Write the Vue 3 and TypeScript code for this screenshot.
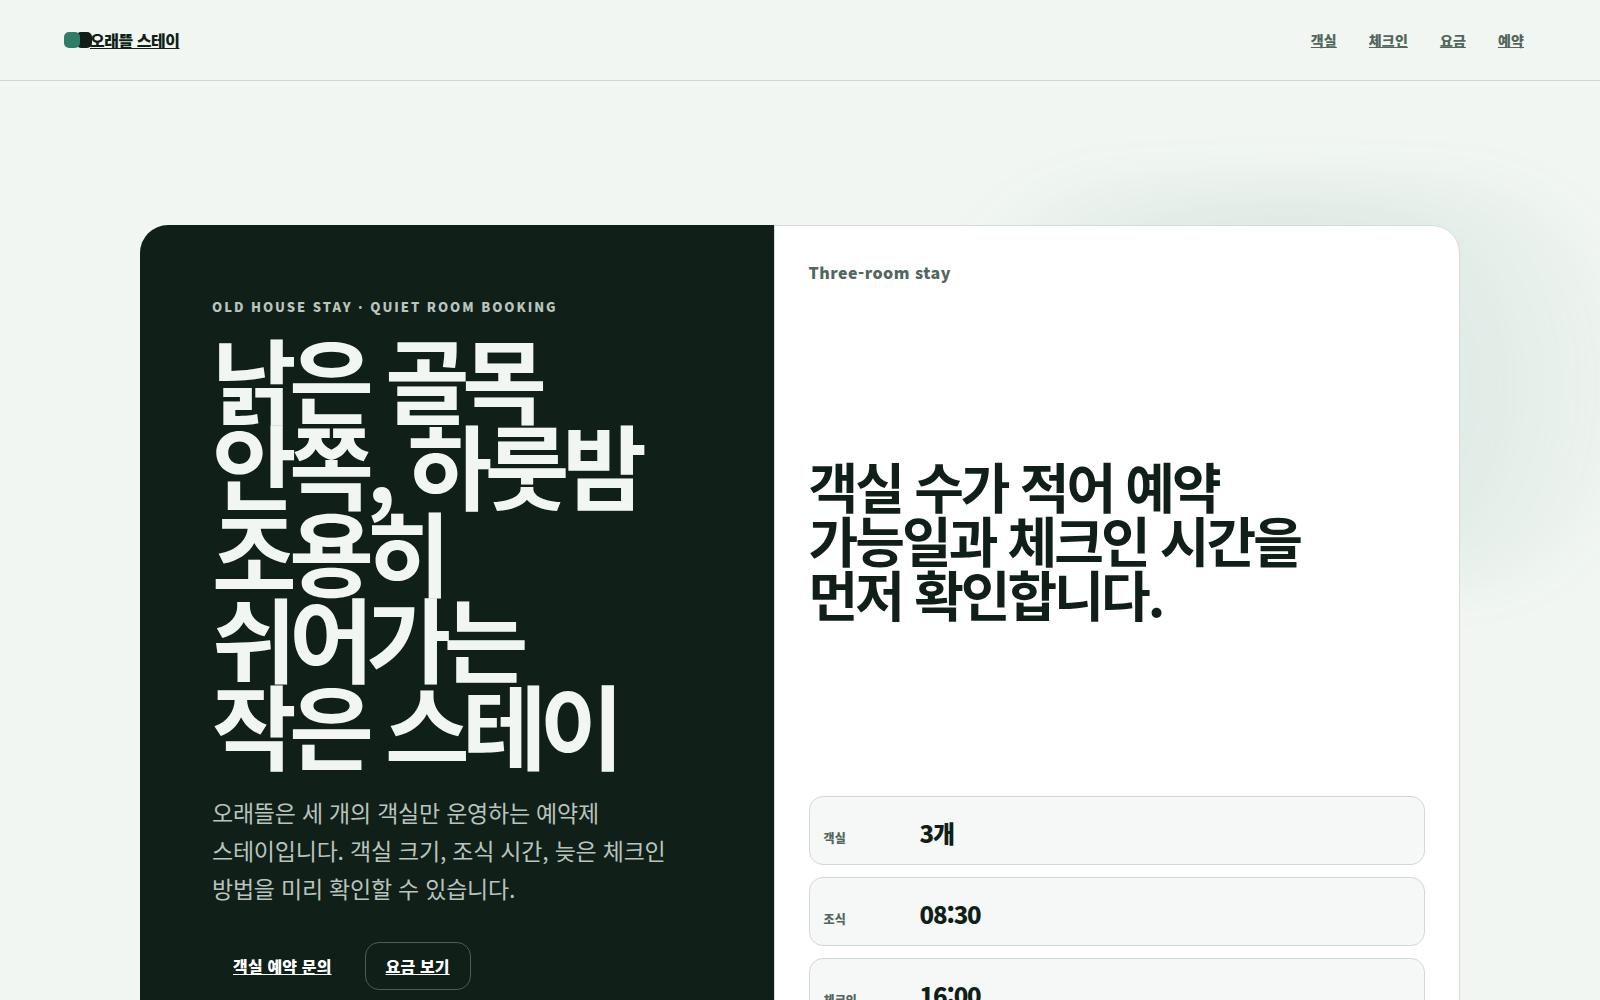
<script setup lang="ts">
interface Fact {
  label: string
  value: string
}

const links: string[] = ['객실', '체크인', '요금', '예약']
const facts: Fact[] = [
  { label: '객실', value: '3개' },
  { label: '조식', value: '08:30' },
  { label: '체크인', value: '16:00' },
]
</script>

<template>
  <div class="page" lang="ko">
    <header class="topbar">
      <a class="brand" href="#"><span class="mark" aria-hidden="true"></span>오래뜰 스테이</a>
      <nav class="nav">
        <a v-for="link in links" :key="link" href="#">{{ link }}</a>
      </nav>
    </header>

    <main class="hero">
      <div class="glow" aria-hidden="true"></div>
      <div class="card">
        <section class="intro">
          <p class="eyebrow">Old house stay · Quiet room booking</p>
          <h1>낡은 골목 안쪽, 하룻밤 조용히 쉬어가는 작은 스테이</h1>
          <p class="lead">
            오래뜰은 세 개의 객실만 운영하는 예약제 스테이입니다. 객실 크기, 조식 시간, 늦은 체크인 방법을 미리 확인할 수 있습니다.
          </p>
          <div class="actions">
            <a class="button primary" href="#">객실 예약 문의</a>
            <a class="button" href="#">요금 보기</a>
          </div>
        </section>
        <section class="summary">
          <p class="tag">Three-room stay</p>
          <h2>객실 수가 적어 예약 가능일과 체크인 시간을 먼저 확인합니다.</h2>
          <dl class="facts">
            <div v-for="fact in facts" :key="fact.label" class="fact">
              <dt>{{ fact.label }}</dt>
              <dd>{{ fact.value }}</dd>
            </div>
          </dl>
        </section>
      </div>
    </main>
  </div>
</template>

<style>
body {
  margin: 0;
  background: #f1f6f2;
}
</style>

<style scoped>
.page {
  min-height: 100vh;
  overflow: hidden;
  background: #f1f6f2;
  color: #111f19;
  font-family: "Noto Sans CJK KR", sans-serif;
  font-size: 16px;
  word-break: keep-all;
}

a {
  color: inherit;
  text-decoration: underline;
}

h1,
h2,
p,
dl,
dd {
  margin: 0;
}

.topbar {
  display: flex;
  align-items: center;
  justify-content: space-between;
  height: 80px;
  padding: 0 64px;
  border-bottom: 1px solid #d0d7d3;
}

.brand {
  display: flex;
  align-items: center;
  gap: 10px;
  font-weight: 800;
  letter-spacing: -0.03em;
}

.mark {
  width: 16px;
  height: 16px;
  border-radius: 5px;
  background: #2f7d68;
  box-shadow: 12px 0 0 #111f19;
}

.nav {
  display: flex;
  gap: 8px;
  color: #53665d;
  font-size: 14px;
  font-weight: 800;
  letter-spacing: 0.01em;
}

.nav a {
  padding: 8px 12px;
}

.hero {
  position: relative;
  padding: 144px 64px;
}

.glow {
  position: absolute;
  top: 104px;
  right: -58px;
  width: 740px;
  height: 400px;
  border-radius: 200px;
  background: radial-gradient(circle 370px, rgba(47, 125, 104, 0.16), rgba(47, 125, 104, 0));
  filter: blur(26px);
}

.card {
  position: relative;
  display: grid;
  grid-template-columns: 48fr 52fr;
  max-width: 1320px;
  margin: 0 auto;
}

.intro {
  padding: 72px;
  border-radius: 28px 0 0 28px;
  background: #111f19;
  color: #f1f6f2;
}

.eyebrow {
  color: #b8c4bd;
  font-size: 13px;
  font-weight: 800;
  line-height: 20px;
  letter-spacing: 0.15em;
  text-transform: uppercase;
}

h1 {
  max-width: 480px;
  margin-top: 17px;
  font-size: 92px;
  font-weight: 700;
  line-height: 0.94;
  letter-spacing: -0.08em;
}

.lead {
  margin-top: 27px;
  color: #b8c4bd;
  font-size: 23px;
  line-height: 38px;
  letter-spacing: -0.01em;
}

.actions {
  display: flex;
  flex-wrap: wrap;
  gap: 12px;
  margin-top: 35px;
}

.button {
  display: flex;
  align-items: center;
  min-height: 46px;
  padding: 0 20px;
  border: 1px solid #4e5c55;
  border-radius: 14px;
  color: #ffffff;
  font-weight: 800;
  letter-spacing: 0.01em;
}

.primary {
  border-color: transparent;
}

.summary {
  display: flex;
  flex-direction: column;
  justify-content: space-between;
  padding: 34px;
  border: 1px solid #d5ddd8;
  border-radius: 0 28px 28px 0;
  background: #ffffff;
}

.tag {
  color: #53665d;
  font-weight: 800;
  line-height: 24px;
  letter-spacing: 0.03em;
}

h2 {
  max-width: 560px;
  font-size: 54px;
  font-weight: 700;
  line-height: 54px;
  letter-spacing: -0.055em;
}

.facts {
  display: grid;
  gap: 12px;
}

.fact {
  display: grid;
  grid-template-columns: 84px 1fr;
  gap: 12px;
  align-items: baseline;
  padding: 16px 14px 12px;
  border: 1px solid #d0d9d5;
  border-radius: 14px;
  background: #f6f8f7;
}

dt {
  color: #53665d;
  font-size: 12px;
  font-weight: 800;
}

dd {
  font-size: 24px;
  font-weight: 900;
  line-height: 39px;
  letter-spacing: -0.05em;
}
</style>
